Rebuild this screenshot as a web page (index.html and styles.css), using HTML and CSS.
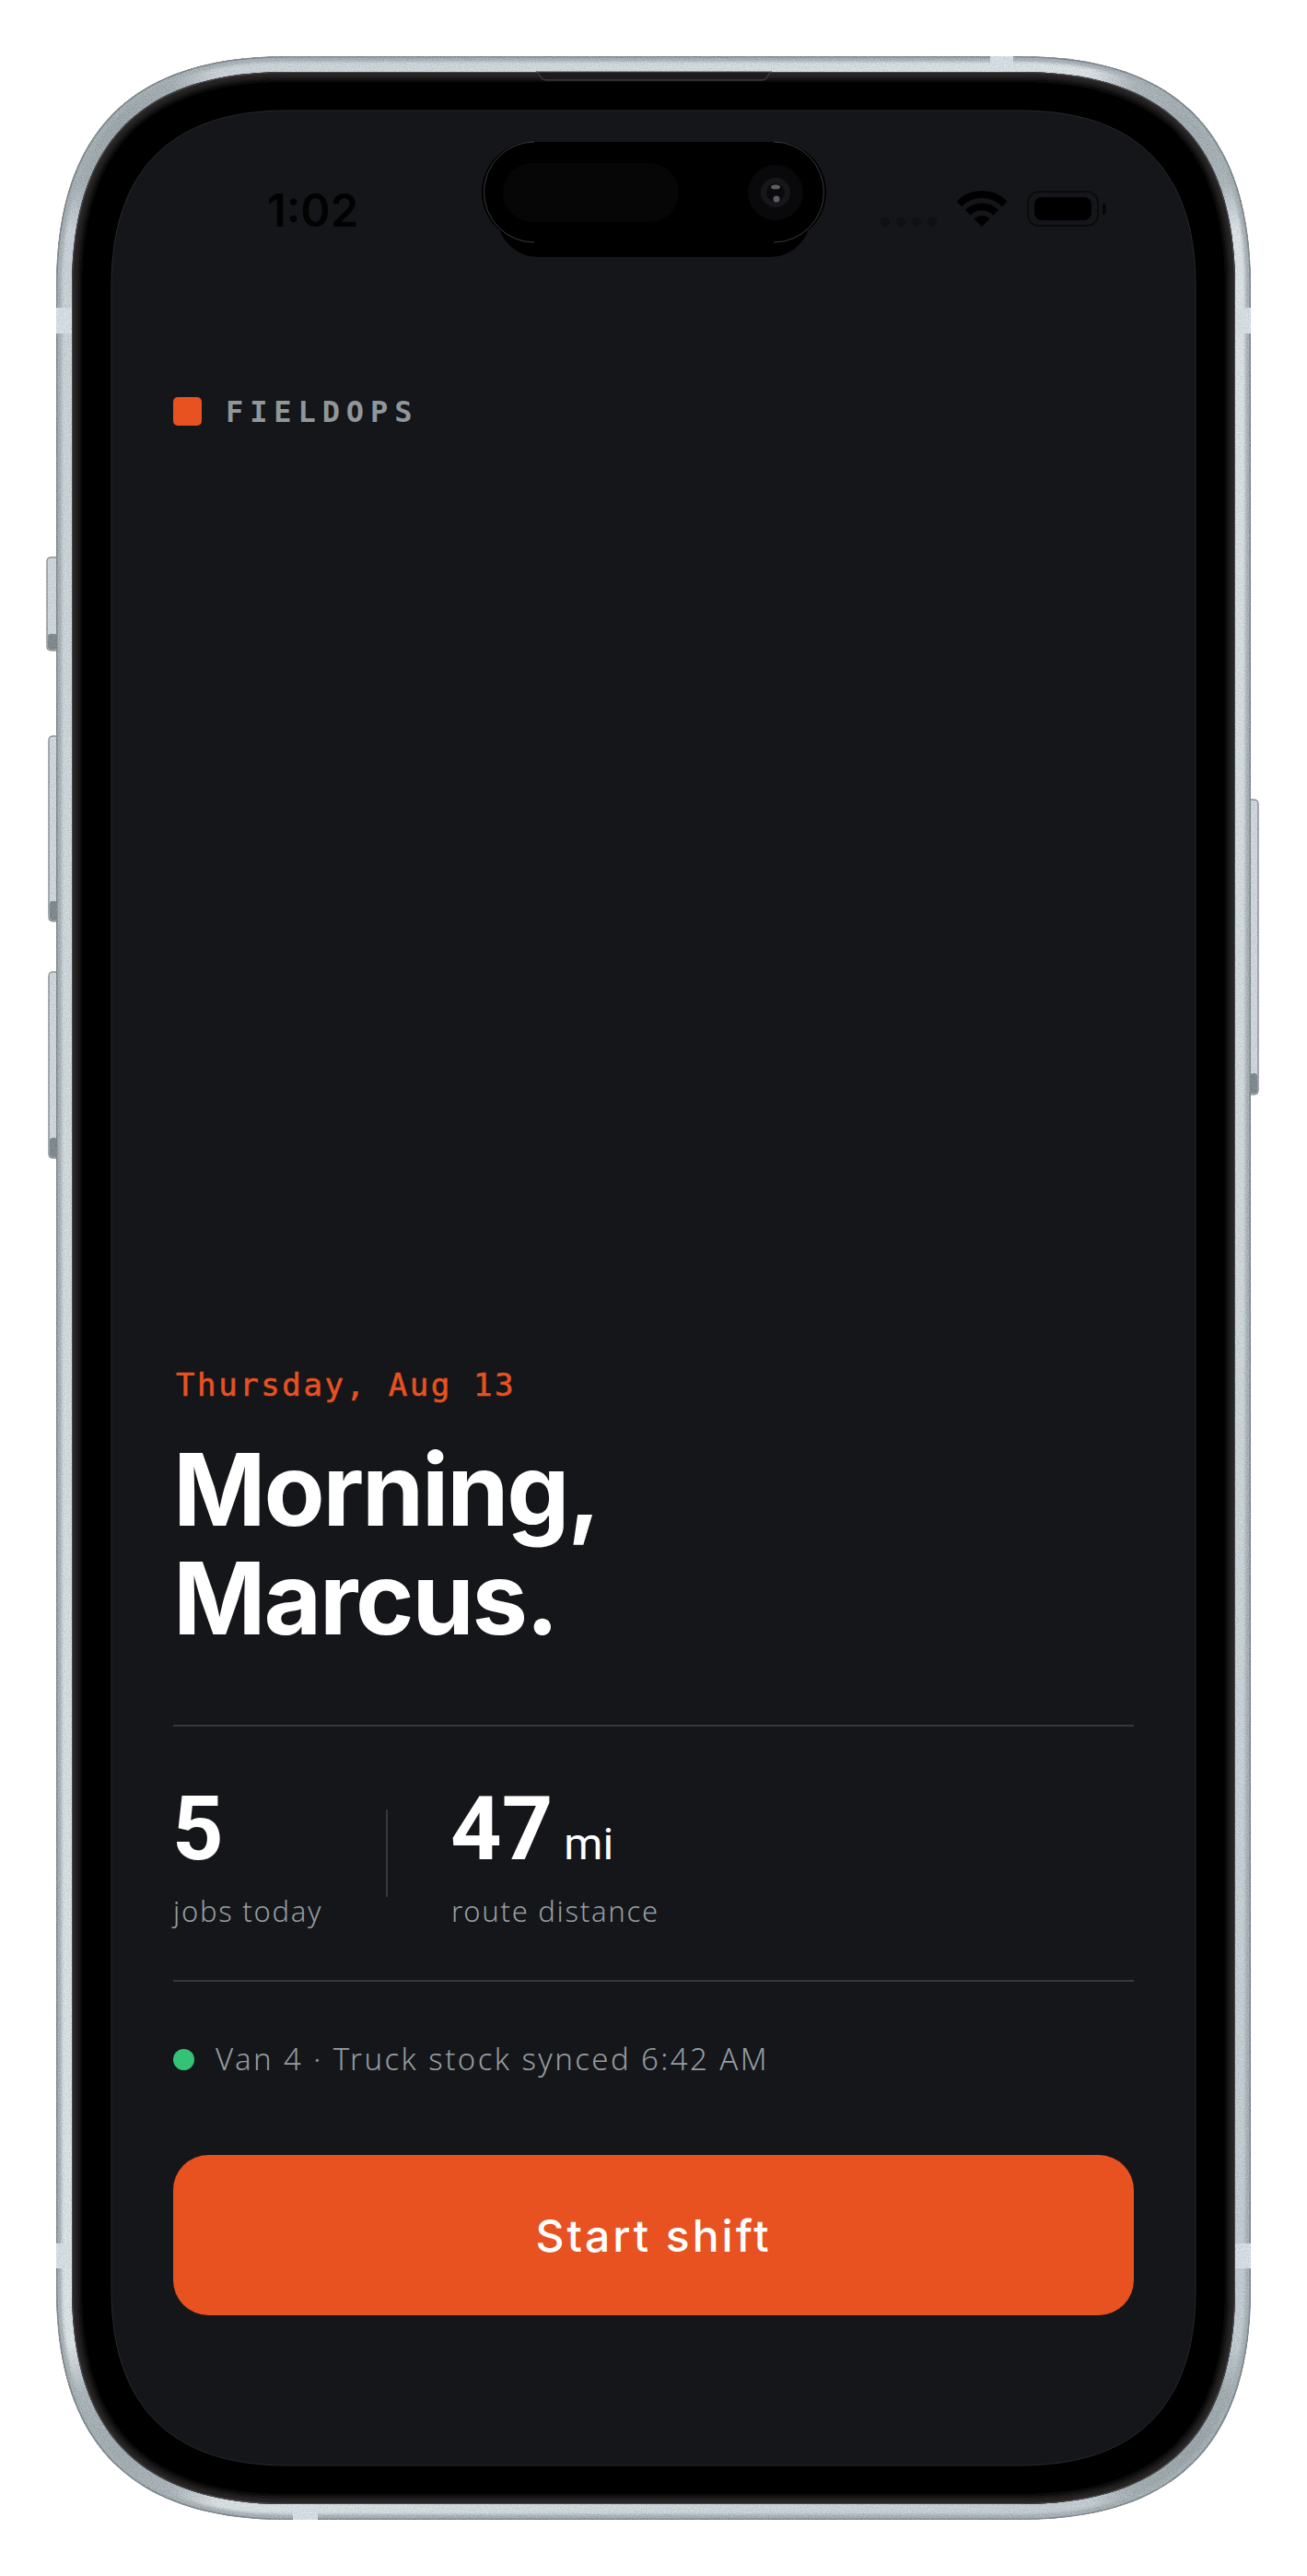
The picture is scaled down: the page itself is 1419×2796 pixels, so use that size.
FILE: index.html
```html
<!DOCTYPE html>
<html lang="en">
<head>
<meta charset="utf-8">
<title>FieldOps</title>
<link rel="stylesheet" href="styles.css">
</head>
<body>
<main class="device">
  <svg class="frame" viewBox="0 0 1419 2796" width="1419" height="2796" aria-hidden="true">
    <defs>
      <filter id="grain" filterUnits="userSpaceOnUse" x="0" y="0" width="1419" height="2796" color-interpolation-filters="sRGB">
        <feTurbulence type="fractalNoise" baseFrequency="0.85" numOctaves="2" seed="4" result="n"/>
        <feColorMatrix in="n" type="matrix" values="1 0 0 0 0 1 0 0 0 0 1 0 0 0 0 0 0 0 0 1" result="g"/>
        <feComposite in="SourceGraphic" in2="g" operator="arithmetic" k1="0" k2="1" k3="0.22" k4="-0.11" result="m"/>
        <feComposite in="m" in2="SourceGraphic" operator="in"/>
      </filter>
      <filter id="soft" x="-5%" y="-5%" width="110%" height="110%"><feGaussianBlur stdDeviation="1.6"/></filter>
      <filter id="softer" x="-5%" y="-5%" width="110%" height="110%"><feGaussianBlur stdDeviation="2.2"/></filter>
      <linearGradient id="rimTone" x1="0" y1="0" x2="1" y2="1" gradientUnits="objectBoundingBox">
        <stop offset="0" stop-color="#c4ccd1"/><stop offset="0.5" stop-color="#d9e0e4"/><stop offset="1" stop-color="#bcc5ca"/>
      </linearGradient>
      <radialGradient id="cornerShade">
        <stop offset="0" stop-color="#8a959a" stop-opacity="0.75"/>
        <stop offset="0.6" stop-color="#8a959a" stop-opacity="0.6"/>
        <stop offset="1" stop-color="#8a959a" stop-opacity="0"/>
      </radialGradient>
      <path id="outer" d="M311 61H1108C1276 61 1358 143 1358 311V2485C1358 2653 1276 2735 1108 2735H311C143 2735 61 2653 61 2485V311C61 143 143 61 311 61Z"/>
      <path id="inner" d="M311 78H1108C1265 78 1341 154 1341 311V2485C1341 2642 1265 2718 1108 2718H311C154 2718 78 2642 78 2485V311C78 154 154 78 311 78Z"/>
      <clipPath id="clipOuter"><use href="#outer"/></clipPath>
      <clipPath id="clipInner"><use href="#inner"/></clipPath>
    </defs>

    <g filter="url(#grain)">
      <rect class="key" x="51" y="605" width="14" height="101" rx="4"/>
      <rect class="key-end" x="52" y="688" width="10" height="17" rx="3"/>
      <rect class="key" x="53" y="799" width="12" height="201" rx="4"/>
      <rect class="key-end" x="54" y="978" width="8" height="21" rx="3"/>
      <rect class="key" x="53" y="1055" width="12" height="202" rx="4"/>
      <rect class="key-end" x="54" y="1235" width="8" height="21" rx="3"/>
      <rect class="key" x="1354" y="868" width="12" height="320" rx="4"/>
      <rect class="key-end" x="1357" y="1165" width="8" height="22" rx="3"/>
      <g clip-path="url(#clipOuter)">
        <use href="#outer" class="rim-fill"/>
        <circle class="rim-corner" cx="115" cy="125" r="130"/>
        <circle class="rim-corner" cx="1304" cy="125" r="130"/>
        <circle class="rim-corner" cx="115" cy="2671" r="130"/>
        <circle class="rim-corner" cx="1304" cy="2671" r="130"/>
        <g filter="url(#soft)"><use href="#outer" class="rim-mid"/></g>
        <use href="#outer" class="rim-edge"/>
      </g>
      <rect class="band" x="61" y="334" width="17" height="28"/>
      <rect class="band" x="1341" y="334" width="17" height="28"/>
      <rect class="band" x="61" y="2435" width="17" height="27"/>
      <rect class="band" x="1341" y="2435" width="17" height="27"/>
      <rect class="band" x="1075" y="61" width="25" height="17"/>
      <rect class="band" x="318" y="2718" width="27" height="17"/>
    </g>

    <use href="#inner" class="bezel"/>
    <g clip-path="url(#clipInner)">
      <g filter="url(#softer)">
        <use href="#inner" class="bezel-a"/>
        <use href="#inner" class="bezel-b"/>
      </g>
      <use href="#inner" class="bezel-c"/>
    </g>
    <path class="slot" d="M582 78C587 78 585 87 593 87H827C835 87 833 78 838 78Z"/>

    <path class="display" d="M311 120H1108C1233 120 1298 185 1298 310V2486C1298 2611 1233 2676 1108 2676H311C186 2676 121 2611 121 2486V310C121 185 186 120 311 120Z"/>

    <rect class="black" x="540" y="190" width="340" height="89" rx="44"/>
    <rect class="black" x="523" y="154" width="374" height="109" rx="54.5"/>
    <path class="island-edge" d="M580 154A54.5 54.5 0 0 0 580 263M840 154A54.5 54.5 0 0 1 840 263"/>
    <rect class="speaker" x="546" y="177" width="191" height="64" rx="32"/>
    <circle class="cam-a" cx="842" cy="209" r="30"/>
    <circle class="cam-b" cx="842" cy="209" r="16"/>
    <circle class="cam-c" cx="842" cy="209" r="10"/>
    <ellipse class="cam-d" cx="842" cy="203" rx="5" ry="2.5"/>
    <circle class="cam-d" cx="843" cy="216" r="3.5"/>
  </svg>

  <section class="screen">
    <header class="statusbar">
      <span class="time">1:02</span>
      <div class="indicators">
        <div class="cell-dots"><i></i><i></i><i></i><i></i></div>
        <svg class="wifi" width="54" height="39" viewBox="0 0 54 39" aria-hidden="true">
          <path class="wifi-arc" d="M2.3 14.3A35 35 0 0 1 51.7 14.3"/>
          <path class="wifi-arc" d="M11.8 23.8A21.5 21.5 0 0 1 42.2 23.8"/>
          <path class="wifi-core" d="M27 39L18.5 30.5A12 12 0 0 1 35.5 30.5Z"/>
        </svg>
        <div class="battery"><div class="battery-level"></div></div>
        <div class="battery-cap"></div>
      </div>
    </header>

    <div class="brand">
      <span class="brand-mark"></span>
      <span class="brand-name">FIELDOPS</span>
    </div>

    <div class="intro">
      <p class="date">Thursday, Aug 13</p>
      <h1 class="greeting">Morning,<br>Marcus.</h1>
    </div>

    <div class="stats">
      <div class="stat">
        <div class="stat-value">5</div>
        <div class="stat-label">jobs today</div>
      </div>
      <div class="stat-divider"></div>
      <div class="stat stat-route">
        <div class="stat-value">47<span class="stat-unit">mi</span></div>
        <div class="stat-label">route distance</div>
      </div>
    </div>

    <div class="sync">
      <span class="sync-dot"></span>
      <span class="sync-text">Van 4 · Truck stock synced 6:42 AM</span>
    </div>

    <button class="cta" type="button">Start shift</button>
  </section>
</main>
</body>
</html>
```
FILE: styles.css
```css
* { box-sizing: border-box; }
html, body { margin: 0; padding: 0; background: #fff; }

.device {
  position: relative;
  width: 1419px;
  height: 2796px;
  padding: 120px 121px;
  overflow: hidden;
}
.frame { position: absolute; left: 0; top: 0; display: block; }

.key { fill: #ccd4d9; stroke: #8b9498; stroke-width: 1.5; }
.key-end { fill: #7f888c; }
.rim-fill { fill: url(#rimTone); }
.rim-corner { fill: url(#cornerShade); }
.rim-mid { fill: none; stroke: #a3adb2; stroke-width: 12; }
.rim-edge { fill: none; stroke: #7f888c; stroke-width: 3; }
.band { fill: #d3dbe0; }
.bezel { fill: #000; }
.bezel-a { fill: none; stroke: #121212; stroke-width: 20; }
.bezel-b { fill: none; stroke: #2c2727; stroke-width: 10; }
.bezel-c { fill: none; stroke: #454b4f; stroke-width: 2; }
.slot { fill: #1b1b1c; stroke: #4d5154; stroke-width: 1; }
.display { fill: #15161a; stroke: #27282c; stroke-width: 1; }
.black { fill: #000; }
.island-edge { fill: none; stroke: #3c3c3f; stroke-width: 1; }
.speaker { fill: #060607; }
.cam-a { fill: #09090b; }
.cam-b { fill: #15171b; }
.cam-c { fill: #0a0a0e; }
.cam-d { fill: #5e5e5e; }

.screen {
  position: relative;
  height: 2556px;
  padding: 0 67px 163px;
  display: flex;
  flex-direction: column;
  font-family: "Noto Sans", "Liberation Sans", sans-serif;
}

.statusbar {
  display: flex;
  justify-content: space-between;
  align-items: flex-start;
  margin: 87px 30px 0 102px;
  height: 39px;
  color: #020203;
}
.time {
  font-family: "Inter", sans-serif;
  font-size: 49px;
  font-weight: 600;
  line-height: 44px;
}
.indicators { display: flex; align-items: flex-start; }
.cell-dots { display: flex; gap: 7px; margin: 29px 22px 0 0; }
.cell-dots i { width: 10px; height: 10px; border-radius: 50%; background: #0f1013; }
.wifi { display: block; }
.wifi-arc { fill: none; stroke: #000; stroke-width: 8; }
.wifi-core { fill: #000; }
.battery {
  width: 78px;
  height: 39px;
  margin-left: 22px;
  padding: 5px 6px;
  border: 2px solid #0b0b0c;
  border-radius: 13px;
}
.battery-level { height: 100%; border-radius: 8px; background: #000; }
.battery-cap { width: 4px; height: 12px; margin: 14px 0 0 4px; border-radius: 0 4px 4px 0; background: #060607; }

.brand { display: flex; align-items: center; margin-top: 185px; height: 31px; }
.brand-mark { width: 31px; height: 31px; border-radius: 5px; background: #e85120; }
.brand-name {
  margin-left: 26px;
  padding-top: 2px;
  font-family: "DejaVu Sans Mono", monospace;
  font-weight: 700;
  font-size: 32px;
  line-height: 31px;
  letter-spacing: 6.9px;
  color: #8f979b;
}

.intro { margin-top: auto; }
.date {
  margin: 0 0 35px 3px;
  font-family: "DejaVu Sans Mono", monospace;
  font-size: 34px;
  line-height: 40px;
  letter-spacing: 2.6px;
  -webkit-text-stroke: 0.6px #e85120;
  color: #e85120;
}
.greeting {
  margin: 0;
  font-family: "Inter", sans-serif;
  font-weight: 650;
  font-size: 108px;
  line-height: 118px;
  letter-spacing: -2.2px;
  color: #fff;
}

.stats {
  display: grid;
  grid-template-columns: 231px 2px 1fr;
  margin-top: 78px;
  padding: 63px 0 55px;
  border-top: 2px solid #37383c;
  border-bottom: 2px solid #37383c;
}
.stat-value {
  height: 96px;
  margin-left: -1px;
  font-family: "Roboto", sans-serif;
  font-weight: 700;
  font-size: 97px;
  line-height: 96px;
  color: #fff;
}
.stat-unit { margin-left: 12px; font-weight: 400; font-size: 48px; line-height: 0; }
.stat-label {
  margin-top: 21px;
  font-weight: 300;
  font-size: 31px;
  line-height: 40px;
  letter-spacing: 1.7px;
  color: #969da1;
}
.stat-divider { margin-top: 27px; height: 95px; background: #37383c; }
.stat-route { margin-left: 69px; }

.sync { display: flex; align-items: center; margin-top: 64px; height: 40px; }
.sync-dot { width: 23px; height: 23px; border-radius: 50%; background: #34c374; }
.sync-text {
  margin-left: 23px;
  font-weight: 300;
  font-size: 33px;
  line-height: 40px;
  letter-spacing: 2.4px;
  color: #969da1;
}

.cta {
  display: block;
  width: 100%;
  height: 174px;
  margin-top: 84px;
  border: 0;
  border-radius: 38px;
  background: #e85120;
  color: #fff;
  font-family: "Inter", sans-serif;
  font-weight: 500;
  font-size: 48px;
  letter-spacing: 3px;
}
```
